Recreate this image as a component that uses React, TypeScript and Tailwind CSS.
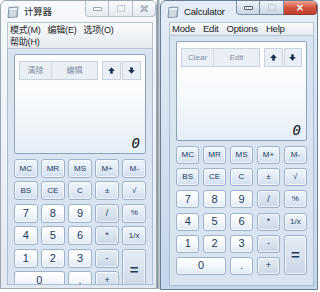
import React from 'react';

type Kind = 'fn' | 'num' | 'op';
type Key = { label: string; kind: Kind; span?: string };

const keys: Key[] = [
  { label: 'MC', kind: 'fn' }, { label: 'MR', kind: 'fn' }, { label: 'MS', kind: 'fn' }, { label: 'M+', kind: 'fn' }, { label: 'M-', kind: 'fn' },
  { label: 'BS', kind: 'fn' }, { label: 'CE', kind: 'fn' }, { label: 'C', kind: 'fn' }, { label: '±', kind: 'fn' }, { label: '√', kind: 'fn' },
  { label: '7', kind: 'num' }, { label: '8', kind: 'num' }, { label: '9', kind: 'num' }, { label: '/', kind: 'op' }, { label: '%', kind: 'fn' },
  { label: '4', kind: 'num' }, { label: '5', kind: 'num' }, { label: '6', kind: 'num' }, { label: '*', kind: 'op' }, { label: '1/x', kind: 'fn' },
  { label: '1', kind: 'num' }, { label: '2', kind: 'num' }, { label: '3', kind: 'num' }, { label: '-', kind: 'op' }, { label: '=', kind: 'op', span: 'row-span-2' },
  { label: '0', kind: 'num', span: 'col-span-2' }, { label: '.', kind: 'num' }, { label: '+', kind: 'op' },
];

const kindClass: Record<Kind, string> = {
  fn: 'bg-linear-to-b from-[#f1f6fc] via-[#e2ebf6] to-[#d2dfee] text-[8px]',
  num: 'bg-linear-to-b from-[#ffffff] via-[#f5f8fc] to-[#dfe8f3] text-[11px]',
  op: 'bg-linear-to-b from-[#e4ebf4] via-[#d9e3ee] to-[#c9d6e6] text-[9px]',
};

const CalcIcon = () => (
  <svg width="12" height="12" viewBox="0 0 12 12">
    <path d="M2 1.5 L11 1 L10 11 L1 11.5 Z" fill="#b9c6d4" stroke="#6d7f93" strokeWidth="0.8" />
    <path d="M2.4 2.2 L10.2 1.8 L9.9 4.2 L2.2 4.6 Z" fill="#e9f0f7" />
    <path d="M2.5 6 H9 M2.3 8 H8.8 M2.2 10 H8.6" stroke="#eef3f8" strokeWidth="0.9" />
  </svg>
);

const Arrow = ({ down }: { down?: boolean }) => (
  <svg width="7" height="7" viewBox="0 0 6 6" className={down ? 'rotate-180' : ''}>
    <path d="M3 0.2 L5.9 3.4 L0.1 3.4 Z" fill="#1b3153" />
    <rect x="1.9" y="3.2" width="2.2" height="2.5" fill="#1b3153" />
  </svg>
);

const Captions = ({ active, h }: { active: boolean; h: string }) => (
  <div className={`flex ${h}`}>
    <div className={`w-[24px] flex items-center justify-center rounded-bl-[4px] border border-t-0 ${active ? 'border-[#7d8ea3] bg-linear-to-b from-[#eef3f9] to-[#c9d6e5]' : 'border-[#b6c1cd] bg-linear-to-b from-[#f8fafc] to-[#e6ebf1]'}`}>
      <div className={`w-[9px] h-[4px] rounded-[1px] border ${active ? 'border-[#44546a] bg-white' : 'border-[#98a4b2] bg-white'}`} />
    </div>
    <div className={`w-[24px] flex items-center justify-center border border-t-0 border-l-0 ${active ? 'border-[#7d8ea3] bg-linear-to-b from-[#eef3f9] to-[#c9d6e5]' : 'border-[#b6c1cd] bg-linear-to-b from-[#f8fafc] to-[#e6ebf1]'}`}>
      <div className="w-[8px] h-[7px] border border-[#c6cfd9]" />
    </div>
    <div className={`flex items-center justify-center rounded-br-[4px] border border-t-0 border-l-0 ${active ? 'w-[33px] border-[#8d3a30] bg-linear-to-b from-[#e8a092] via-[#d2553f] to-[#c23f2a]' : 'w-[23px] border-[#b6c1cd] bg-linear-to-b from-[#f8fafc] to-[#e6ebf1]'}`}>
      <span className={`font-['DejaVu_Sans',sans-serif] font-bold leading-none ${active ? 'text-white text-[10px]' : 'text-[#f4f6f9] text-[11px] [-webkit-text-stroke:0.7px_#8b97a6]'}`}>×</span>
    </div>
  </div>
);

type CalcProps = {
  active: boolean;
  title: string;
  menu: React.ReactNode;
  toolbar: [string, string];
  rowH: string;
  gapY: string;
  capH: string;
  outer: string;
  inner: string;
};

const Calc = ({ active, title, menu, toolbar, rowH, gapY, capH, outer, inner }: CalcProps) => (
  <div className={`flex flex-col rounded-t-[6px] border overflow-hidden ${outer} ${active ? 'border-[#6b7b90] bg-linear-to-b from-[#e4edf7] via-[#d2e0ef] to-[#c4d6ea]' : 'border-[#9aa6b4] bg-linear-to-b from-[#f6f8fb] via-[#eef2f6] to-[#e3e9f0]'}`}>
    <div className="h-[21px] shrink-0 flex items-start justify-between">
      <div className="flex items-center gap-[5px] pl-[6px] pt-[5px]">
        <CalcIcon />
        <span className="text-[9.5px] leading-none text-[#1b1b1b] font-['Liberation_Sans','Noto_Sans_CJK_SC',sans-serif] tracking-[-0.2px]">{title}</span>
      </div>
      <Captions active={active} h={capH} />
    </div>
    <div className={`flex flex-col flex-1 min-h-0 ${inner}`}>
      <div className="shrink-0 border border-[#b7c3d1] bg-linear-to-b from-[#fafbfc] to-[#e4e9ef] text-[#1e1e1e] font-['Liberation_Sans','Noto_Sans_CJK_SC',sans-serif] text-[9px] tracking-[-0.2px]">
        {menu}
      </div>
      <div className="flex-1 min-h-0 overflow-hidden border border-t-0 border-[#a9bcd3] bg-[#d9e4f1] px-[6px] pt-[5px]">
        <div className="h-[100px] rounded-[2px] border border-[#8ea2ba] bg-linear-to-b from-[#ffffff] via-[#f7fafd] to-[#e6eef8] px-[4px] pt-[6px] flex flex-col">
          <div className="flex items-stretch h-[19px] gap-[4px]">
            <div className="flex border border-[#c9d3df] bg-[#eaeff5] text-[#7d8ca0] text-[8px] font-['Liberation_Sans','Noto_Sans_CJK_SC',sans-serif]">
              <div className="w-[32px] flex items-center justify-center border-r border-[#d3dbe5]">{toolbar[0]}</div>
              <div className="w-[45px] flex items-center justify-center">{toolbar[1]}</div>
            </div>
            <div className="flex flex-1 gap-[1px]">
              <div className="flex-1 flex items-center justify-center border border-[#c9d3df] bg-[#eaeff5]"><Arrow /></div>
              <div className="flex-1 flex items-center justify-center border border-[#c9d3df] bg-[#eaeff5]"><Arrow down /></div>
            </div>
          </div>
          <div className="flex-1 flex items-end justify-end pb-[3px] pr-[1px]">
            <span className="font-['DejaVu_Sans_Mono',monospace] italic text-[14px] leading-none text-[#111]">0</span>
          </div>
        </div>
        <div className={`mt-[5px] grid grid-cols-5 gap-x-[3.5px] ${gapY} ${rowH}`}>
          {keys.map((k) => (
            <div
              key={k.label}
              className={`${k.span ?? ''} ${kindClass[k.kind]} flex items-center justify-center rounded-[3px] border border-[#9db1ca] shadow-[inset_0_0_0_1px_rgba(255,255,255,0.7)] text-[#1d3a5c] font-['Liberation_Sans',sans-serif] leading-none ${k.label === '=' ? 'text-[15px] font-bold' : ''}`}
            >
              {k.label}
            </div>
          ))}
        </div>
      </div>
    </div>
  </div>
);

export default function App() {
  return (
    <div className="w-[320px] h-[292px] bg-white flex items-start overflow-hidden">
      <Calc
        active={false}
        title="计算器"
        outer="w-[157px] h-[289px] pb-[3px]"
        inner="ml-[6px] mr-[3px]"
        rowH="auto-rows-[19px]"
        gapY="gap-y-[3.4px]"
        capH="h-[16px]"
        toolbar={['清除', '编辑']}
        menu={
          <div className="h-[25px] flex flex-col justify-center pl-[2px] leading-[12px]">
            <div className="flex gap-[7px]">
              <span>模式(M)</span>
              <span>编辑(E)</span>
              <span>选项(O)</span>
            </div>
            <div>帮助(H)</div>
          </div>
        }
      />
      <div className="w-[3px] h-[289px] bg-linear-to-r from-[#7f8a96] to-[#d4d9df]" />
      <Calc
        active={true}
        title="Calculator"
        outer="w-[158px] h-[290px] pb-[3px]"
        inner="ml-[8px] mr-[3px]"
        rowH="auto-rows-[18px]"
        gapY="gap-y-[4.2px]"
        capH="h-[14px]"
        toolbar={['Clear', 'Edit']}
        menu={
          <div className="h-[12px] flex items-center gap-[8px] pl-[2px] text-[9.5px]">
            <span>Mode</span>
            <span>Edit</span>
            <span>Options</span>
            <span>Help</span>
          </div>
        }
      />
    </div>
  );
}
